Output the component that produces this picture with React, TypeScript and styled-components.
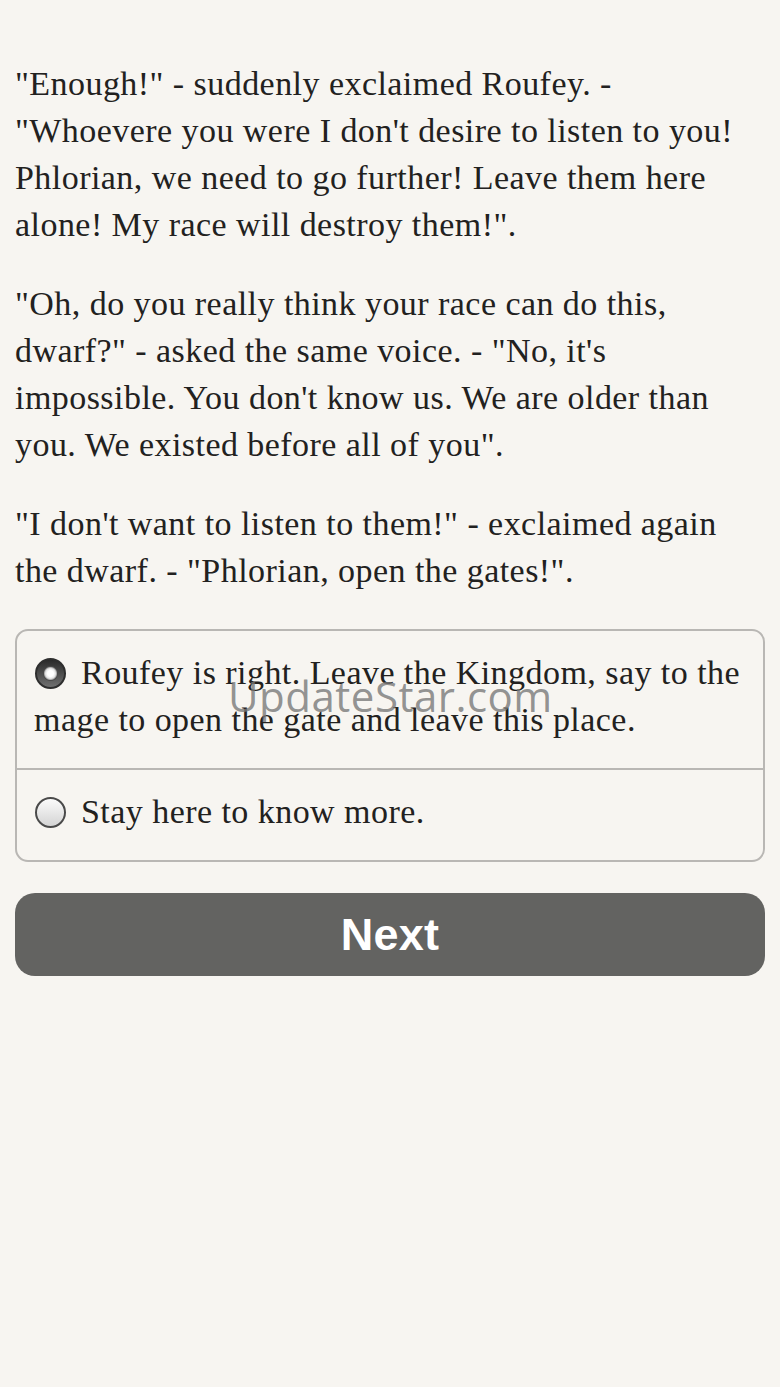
import React, { useState } from "react";
import styled, { createGlobalStyle } from "styled-components";

const Global = createGlobalStyle`
  html, body { margin: 0; padding: 0; background: #f7f5f1; }
  body { font-family: "Liberation Serif", "Times New Roman", serif; }
`;

const Page = styled.div`
  position: relative;
  width: 780px;
  min-height: 1387px;
  box-sizing: border-box;
  padding: 60px 15px 0 15px;
  background: #f7f5f1;
  color: #222120;
`;

const Story = styled.div`
  display: flex;
  flex-direction: column;
  gap: 32px;
`;

const Para = styled.p`
  margin: 0;
  font-size: 34px;
  line-height: 47px;
  letter-spacing: 0.45px;
`;

const Choices = styled.div`
  margin-top: 35px;
  border: 2px solid #b9b7b4;
  border-radius: 13px;
  overflow: hidden;
`;

const Choice = styled.label<{ $last?: boolean }>`
  display: block;
  padding: 18px 17px 25px 17px;
  font-size: 34px;
  line-height: 47px;
  letter-spacing: 0.45px;
  cursor: pointer;
  border-bottom: ${(p) => (p.$last ? "none" : "2px solid #b9b7b4")};
`;

const Radio = styled.span<{ $on: boolean }>`
  display: inline-block;
  vertical-align: -5px;
  width: 31px;
  height: 31px;
  margin: 0 15px 0 1px;
  border-radius: 50%;
  box-sizing: border-box;
  border: 2px solid ${(p) => (p.$on ? "#2e2e2e" : "#4a4a4a")};
  background: ${(p) =>
    p.$on
      ? "radial-gradient(circle at 50% 50%, #ffffff 0 3px, #e4e4e4 5px, #b0b0b0 6px, #4a4a4a 7px, transparent 8px), linear-gradient(#2a2a2a, #707070)"
      : "linear-gradient(#fbfbfb, #d4d4d4)"};
`;

const NextButton = styled.button`
  display: block;
  width: 100%;
  margin-top: 31px;
  height: 83px;
  border: none;
  border-radius: 20px;
  background: #636361;
  color: #ffffff;
  font-family: "Liberation Sans", Arial, sans-serif;
  font-weight: 700;
  font-size: 45px;
  letter-spacing: 0.3px;
  cursor: pointer;
`;

const Watermark = styled.div`
  position: absolute;
  left: 228px;
  top: 670px;
  font-family: "Open Sans", "Liberation Sans", sans-serif;
  font-size: 42px;
  line-height: 52px;
  color: rgba(120, 120, 120, 0.8);
  pointer-events: none;
  letter-spacing: 0.5px;
`;

const options = [
  "Roufey is right. Leave the Kingdom, say to the mage to open the gate and leave this place.",
  "Stay here to know more.",
];

export default function App() {
  const [sel, setSel] = useState(0);
  return (
    <Page>
      <Global />
      <Story>
        <Para>
          "Enough!" - suddenly exclaimed Roufey. - "Whoevere you were I don't desire to listen to
          you! Phlorian, we need to go further! Leave them here alone! My race will destroy
          them!".
        </Para>
        <Para>
          "Oh, do you really think your race can do this, dwarf?" - asked the same voice. - "No,
          it's impossible. You don't know us. We are older than you. We existed before all of
          you".
        </Para>
        <Para>
          "I don't want to listen to them!" - exclaimed again the dwarf. - "Phlorian, open the
          gates!".
        </Para>
      </Story>
      <Choices>
        {options.map((o, i) => (
          <Choice key={i} $last={i === options.length - 1} onClick={() => setSel(i)}>
            <Radio $on={sel === i} />
            {o}
          </Choice>
        ))}
      </Choices>
      <NextButton>Next</NextButton>
      <Watermark>UpdateStar.com</Watermark>
    </Page>
  );
}
